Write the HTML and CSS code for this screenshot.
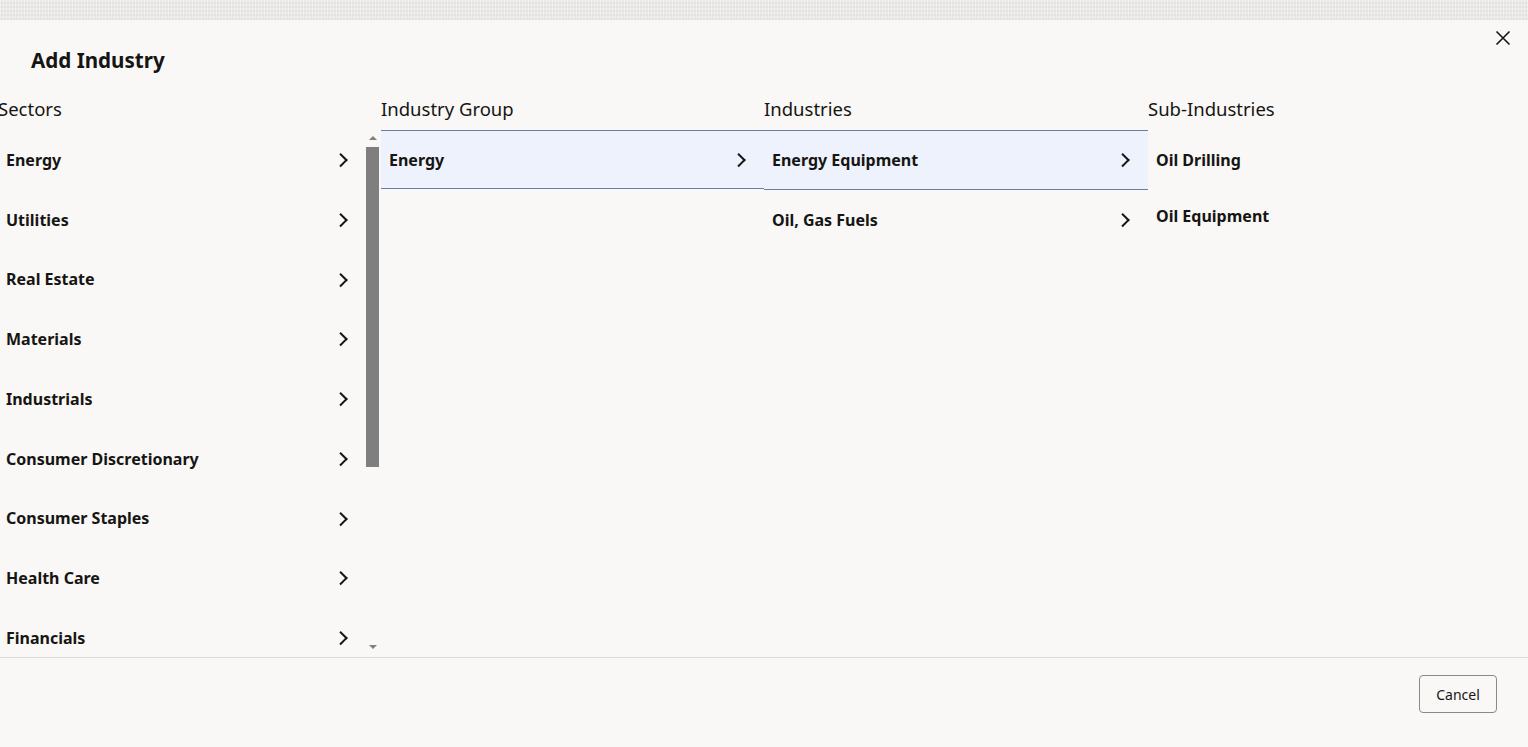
FILE: index.html
```html
<!DOCTYPE html>
<html lang="en">
<head>
  <meta charset="UTF-8" />
  <meta name="viewport" content="width=device-width, initial-scale=1.0" />
  <title>Add Industry</title>
  <link rel="stylesheet" href="styles.css">
</head>
<body>
  <div class="backdrop"></div>

  <div class="dialog">
    <div class="dialog-header">
      <h1>Add Industry</h1>
      <button class="close" title="Close">
        <svg width="16" height="16" viewBox="0 0 16 16"><path d="M1.5 1.5l13 13M14.5 1.5l-13 13" stroke="#161513" stroke-width="1.6" fill="none"/></svg>
      </button>
    </div>

    <div class="columns">
      <div class="col col-sectors">
        <h2>Sectors</h2>
        <div class="list-wrap">
          <ul class="list">
            <li>Energy <span class="chev"></span></li>
            <li>Utilities <span class="chev"></span></li>
            <li>Real Estate <span class="chev"></span></li>
            <li>Materials <span class="chev"></span></li>
            <li>Industrials <span class="chev"></span></li>
            <li>Consumer Discretionary <span class="chev"></span></li>
            <li>Consumer Staples <span class="chev"></span></li>
            <li>Health Care <span class="chev"></span></li>
            <li>Financials <span class="chev"></span></li>
          </ul>
          <div class="scrollbar">
            <span class="arrow up"></span>
            <div class="track"><div class="thumb"></div></div>
            <span class="arrow down"></span>
          </div>
        </div>
      </div>

      <div class="col col-group">
        <h2>Industry Group</h2>
        <ul class="list">
          <li class="selected">Energy <span class="chev"></span></li>
        </ul>
      </div>

      <div class="col col-ind">
        <h2>Industries</h2>
        <ul class="list">
          <li class="selected">Energy Equipment <span class="chev"></span></li>
          <li>Oil, Gas Fuels <span class="chev"></span></li>
        </ul>
      </div>

      <div class="col col-sub">
        <h2>Sub-Industries</h2>
        <ul class="list leaf">
          <li>Oil Drilling</li>
          <li>Oil Equipment</li>
        </ul>
      </div>
    </div>

    <div class="dialog-footer">
      <button class="btn">Cancel</button>
    </div>
  </div>
</body>
</html>
```

FILE: styles.css
```css
body {
  margin: 0;
  font-family: 'Noto Sans', 'Open Sans', sans-serif;
  color: #161513;
  background-color: #ebe9e7;
  overflow: hidden;
}
.backdrop {
  height: 20px;
  background-color: #ebe9e7;
  background-image:
    repeating-linear-gradient(90deg, rgba(255,255,255,0.35) 0 1px, transparent 1px 3px),
    repeating-linear-gradient(0deg, rgba(0,0,0,0.03) 0 2px, transparent 2px 4px);
}
.dialog {
  background-color: #f9f8f6;
  height: 727px;
  display: flex;
  flex-direction: column;
  overflow: hidden;
}
.dialog-header {
  display: flex;
  justify-content: space-between;
  align-items: flex-start;
  padding: 0 17px 0 31px;
  height: 76px;
}
.dialog-header h1 {
  margin: 26px 0 0;
  font-size: 20.6px;
  font-weight: 700;
  line-height: 28px;
}
.close {
  margin-top: 10px;
  border: none;
  background: none;
  padding: 0;
  width: 16px;
  height: 16px;
  cursor: pointer;
}
.columns {
  display: flex;
  margin-left: -2px;
  flex: 1;
  min-height: 0;
}
.col h2 {
  margin: 0;
  font-size: 18.5px;
  font-weight: 400;
  line-height: 26px;
  height: 34px;
}
.col-sectors { width: 383px; }
.col-group { width: 383px; }
.col-ind { width: 384px; }
.col-sub { flex: 1; }

.list-wrap {
  display: flex;
  height: 527px;
  overflow: hidden;
}
.list {
  list-style: none;
  margin: 0;
  padding: 0;
}
.col-sectors .list { width: 368px; }
.list li {
  display: flex;
  align-items: center;
  justify-content: space-between;
  height: 59.75px;
  box-sizing: border-box;
  padding: 0 18px 0 8px;
  font-size: 16px;
  font-weight: 700;
  border-top: 1px solid transparent;
  border-bottom: 1px solid transparent;
}
.list li.selected {
  background-color: #eef2fc;
  border-color: #6f7ba5;
}
.col-group .list li.selected { height: 59px; }
.list.leaf { padding-top: 2px; }
.list.leaf li { height: 56px; }

.chev {
  width: 7.5px;
  height: 7.5px;
  border-top: 2px solid #161513;
  border-right: 2px solid #161513;
  transform: rotate(45deg);
  margin-right: 3px;
}

.scrollbar {
  width: 13px;
  display: flex;
  flex-direction: column;
  align-items: center;
}
.arrow {
  width: 0;
  height: 0;
  border-left: 4px solid transparent;
  border-right: 4px solid transparent;
}
.arrow.up {
  border-bottom: 4px solid #7f7f7f;
  margin: 6px 0 7px;
}
.arrow.down {
  border-top: 4px solid #7f7f7f;
  margin: 0 0 8px;
}
.track {
  flex: 1;
  width: 13px;
}
.thumb {
  height: 320px;
  background-color: #7f7f7f;
}

.dialog-footer {
  border-top: 1px solid #dcdad7;
  height: 89px;
  display: flex;
  justify-content: flex-end;
  align-items: flex-start;
  padding-right: 31px;
}
.btn {
  margin-top: 17px;
  width: 78px;
  height: 38px;
  border: 1px solid #8b8987;
  border-radius: 4px;
  background-color: #f9f8f6;
  font-family: 'Noto Sans', sans-serif;
  font-size: 14px;
  color: #161513;
  cursor: pointer;
}
```
